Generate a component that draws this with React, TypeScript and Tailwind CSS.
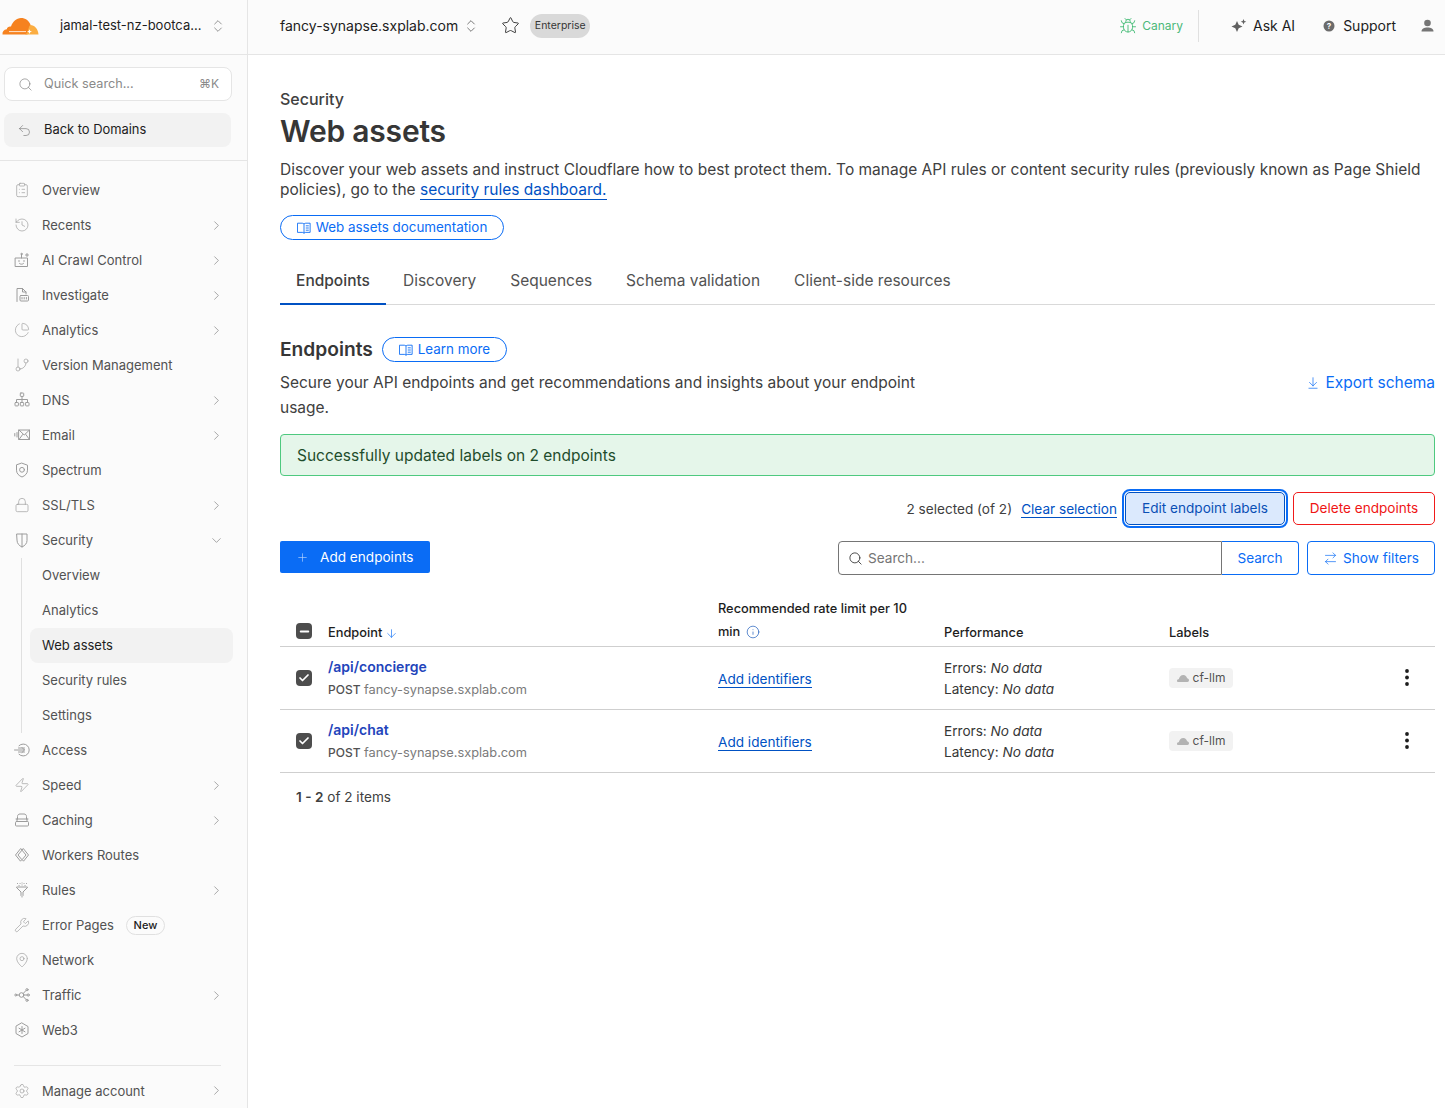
import React from "react";
import {
  ClipboardList, History, PieChart, GitBranch, Lock, Zap, Wrench, MapPin, Settings, ChevronRight, ChevronDown,
  ChevronsUpDown, Search, Undo2, Star, Bug, Plus, ArrowDown, ArrowDownToLine,
  ArrowRightLeft, Info, Check, Minus,
} from "lucide-react";

type IconProps = { size?: number; strokeWidth?: number; className?: string };

function mk(children: React.ReactNode, w = 16) {
  return function Custom({ size = 16, strokeWidth = 1, className }: IconProps) {
    return (
      <svg width={(size * w) / 16} height={size} viewBox={`0 0 ${w} 16`} fill="none" stroke="currentColor" strokeWidth={strokeWidth} strokeLinecap="round" strokeLinejoin="round" className={className}>
        {children}
      </svg>
    );
  };
}

const InvestigateIcon = mk(<><path d="M3 14.500V1.500h5.500L12 5v2" /><path d="M8.500 1.500V5H12" /><rect x="6" y="8.500" width="8.500" height="5.500" rx="1" /><path d="M8 10.500v1.500M10.200 10.500v1.500M12.400 10.500v1.500" /></>);
const RobotIcon = mk(<><rect x="1.500" y="6" width="12" height="8.500" /><path d="M7.500 2.500V6" /><circle cx="7.500" cy="2" r=".7" /><path d="M5 8.500v1M10 8.500v1M5.500 11.500c1 1 3 1 4 0" /><path d="M13 1.500v3M11.500 3h3" /></>);
const DnsIcon = mk(<><rect x="6.300" y="1" width="3.400" height="3.400" rx=".6" /><path d="M8 4.400V10M2.500 10V7.500h11V10" /><rect x="1" y="10.500" width="3.400" height="3.400" rx=".6" /><rect x="6.300" y="10.500" width="3.400" height="3.400" rx=".6" /><rect x="11.600" y="10.500" width="3.400" height="3.400" rx=".6" /></>);
const EmailIcon = mk(<><rect x="5" y="3" width="10.500" height="9.500" /><path d="M5 3l5.200 5 5.300-5M5 12.500l3.700-5M15.500 12.500l-3.700-5" /><path d="M3 5.500v4.500M.8 6.500v2.500" /></>);
const SpectrumIcon = mk(<><path d="M8 1.200l5.500 2v5c0 3.300-2.300 5.500-5.500 6.800-3.200-1.300-5.500-3.500-5.500-6.800v-5z" /><circle cx="8" cy="7.800" r="2.400" /></>);
const ShieldIcon = mk(<><path d="M3 2h10v6.500c0 3-2 5-5 6.500-3-1.500-5-3.500-5-6.500z" /><path d="M8 2v13" /></>);
const AccessIcon = mk(<><path d="M5 3.700a6 6 0 1 1 0 8.600" /><path d="M.5 8h10M8 5.500L10.500 8 8 10.500M4.500 6h6M4.500 10h6" /></>);
const CacheIcon = mk(<><path d="M3.500 7V4.500c0-1.500 1-2.500 2.500-2.500h4c1.500 0 2.500 1 2.500 2.500V7" /><path d="M2 7h12" /><rect x="1.500" y="9.500" width="13" height="4.500" rx="1" /><path d="M3 7v2.500M13 7v2.500" /></>);
const WorkersIcon = mk(<><path d="M6.500 1.800L1.500 8l5 6.200 1.300-1.600L4 8l3.800-4.600z" /><path d="M9.500 1.800l5 6.200-5 6.200-1.300-1.600L12 8 8.200 3.400z" /></>);
const RulesIcon = mk(<><path d="M2.500 5.500L7 10v3.500M13.500 5.500L9 10v3.500" /><path d="M8 14.500v.5" /><path d="M3.500 1.500h.1M6 1.500h.1M8 1h.1M10 1.500h.1M12.500 1.500h.1M5 3.500h.1M8 3h.1M11 3.500h.1M3 5h10" /></>);
const TrafficIcon = mk(<><circle cx="1.800" cy="8" r="1" /><path d="M2.800 8H5" /><circle cx="7.500" cy="8" r="2.300" /><path d="M9.200 6.500L12 3.500M9.800 8h3.200M9.200 9.500l2.800 3" /><circle cx="13" cy="2.700" r="1.100" /><circle cx="14.200" cy="8" r="1.100" /><circle cx="13" cy="13.300" r="1.100" /></>);
const Web3Icon = mk(<><path d="M8 1l6 3.500v7L8 15l-6-3.500v-7z" /><path d="M8 4.500v7M5 6.200l6 3.600M11 6.200L5 9.800" /></>);
const BookIcon = mk(<><path d="M1 2.500h5c1 0 1.500.5 2 1 .5-.5 1-1 2-1h5v10.500h-5c-1 0-1.500.3-2 1-.5-.7-1-1-2-1H1z" /><path d="M8 3.500V14M10.500 5.500h2.500M10.500 8h2.500M10.500 10.500h2.500" /></>);

function Logo() {
  return (
    <svg width="38" height="18" viewBox="0 0 38 18" className="shrink-0">
      <path d="M1.500 17.500c-.3-2.800 1.300-5 4.300-5.300.4-1.900 2.100-3 4.200-2.600C11.500 4.600 15.500 1 20 1c4.300 0 8 2.700 9.500 6.500L26.500 17.500z" fill="#f6821f" />
      <path d="M29 8c4.300-.2 8.200 3.800 8.500 9.500H24c1.500-.8 2.400-1.800 2.800-3.200.5-2 1-4.300 2.200-6.300z" fill="#fbad41" />
      <path d="M8 14.600h17" stroke="#fff" strokeWidth="0.8" />
      <path d="M28.500 12.300l.7 1.700 1.800.6-1.800.6-.7 1.700-.7-1.700-1.800-.6 1.800-.6z" fill="#fff" />
    </svg>
  );
}

type Item = { label: string; icon?: React.ElementType; arrow?: "right" | "down"; active?: boolean; badge?: string };

const upper: Item[] = [
  { label: "Overview", icon: ClipboardList },
  { label: "Recents", icon: History, arrow: "right" },
  { label: "AI Crawl Control", icon: RobotIcon, arrow: "right" },
  { label: "Investigate", icon: InvestigateIcon, arrow: "right" },
  { label: "Analytics", icon: PieChart, arrow: "right" },
  { label: "Version Management", icon: GitBranch },
  { label: "DNS", icon: DnsIcon, arrow: "right" },
  { label: "Email", icon: EmailIcon, arrow: "right" },
  { label: "Spectrum", icon: SpectrumIcon },
  { label: "SSL/TLS", icon: Lock, arrow: "right" },
  { label: "Security", icon: ShieldIcon, arrow: "down" },
];
const subs: Item[] = [
  { label: "Overview" },
  { label: "Analytics" },
  { label: "Web assets", active: true },
  { label: "Security rules" },
  { label: "Settings" },
];
const lower: Item[] = [
  { label: "Access", icon: AccessIcon },
  { label: "Speed", icon: Zap, arrow: "right" },
  { label: "Caching", icon: CacheIcon, arrow: "right" },
  { label: "Workers Routes", icon: WorkersIcon },
  { label: "Rules", icon: RulesIcon, arrow: "right" },
  { label: "Error Pages", icon: Wrench, badge: "New" },
  { label: "Network", icon: MapPin },
  { label: "Traffic", icon: TrafficIcon, arrow: "right" },
  { label: "Web3", icon: Web3Icon },
];

function NavRow({ item }: { item: Item }) {
  const Icon = item.icon;
  return (
    <div className="flex h-[35px] items-center pb-[1px] pl-[14px] pr-[23px]">
      <span className="flex w-[28px] shrink-0 items-center">
        {Icon && <Icon size={16} strokeWidth={1} className="text-[#9c9c9c]" />}
      </span>
      <span className="text-[13px] leading-5 text-[#525252]">{item.label}</span>
      {item.badge && (
        <span className="ml-[12px] flex h-[19px] w-[39px] items-center justify-center rounded-full border border-[#e0e0e0] text-[11px] font-medium text-[#1d1d1d]">
          {item.badge}
        </span>
      )}
      {item.arrow === "right" && <ChevronRight size={15} strokeWidth={1} className="ml-auto text-[#757575]" />}
      {item.arrow === "down" && <ChevronDown size={15} strokeWidth={1} className="ml-auto text-[#757575]" />}
    </div>
  );
}

function Sidebar() {
  return (
    <aside className="flex h-[1108px] w-[248px] shrink-0 flex-col overflow-hidden border-r border-[#e5e5e5]">
      <div className="flex h-[55px] shrink-0 items-center border-b border-[#e5e5e5] pb-[3px] pl-[1px] pr-[21px]">
        <Logo />
        <span className="ml-[21px] whitespace-nowrap text-[13px] font-normal text-[#1d1d1d]">jamal-test-nz-bootca...</span>
        <ChevronsUpDown size={16} strokeWidth={1} className="ml-auto text-[#616161]" />
      </div>
      <div className="border-b border-[#e5e5e5] pb-[13px] pl-[4px] pr-[16px] pt-[12px]">
        <div className="mr-[-1px] flex h-[34px] items-center rounded-[8px] border border-[#e5e5e5] bg-white pl-[13px] pr-[12px]">
          <Search size={15} strokeWidth={1} className="text-[#757575]" />
          <span className="ml-[11px] text-[12.7px] text-[#8a8a8a]">Quick search...</span>
          <span className="ml-auto text-[12px] text-[#8a8a8a]">⌘K</span>
        </div>
        <div className="mt-[12px] flex h-[34px] items-center rounded-[8px] bg-[#f2f2f2] pl-[13px]">
          <Undo2 size={15} strokeWidth={1} className="text-[#757575]" />
          <span className="ml-[12px] text-[12.9px] text-[#1d1d1d]">Back to Domains</span>
        </div>
      </div>
      <nav className="pt-[12px]">
        {upper.map((i) => <NavRow key={i.label} item={i} />)}
        <div className="ml-[21px] border-l border-[#e0e0e0] pl-[8px] pr-[14px]">
          {subs.map((s) => (
            <div key={s.label} className={`flex h-[35px] items-center rounded-[8px] pl-[12px] text-[13px] ${s.active ? "bg-[#f2f2f2] text-[#1d1d1d]" : "text-[#525252]"}`}>
              {s.label}
            </div>
          ))}
        </div>
        {lower.map((i) => <NavRow key={i.label} item={i} />)}
      </nav>
      <div className="mb-[8px] ml-[14px] mr-[26px] mt-[17px] border-t border-[#e5e5e5]" />
      <NavRow item={{ label: "Manage account", icon: Settings, arrow: "right" }} />
    </aside>
  );
}

function Header() {
  return (
    <header className="flex h-[55px] shrink-0 items-center border-b border-[#e5e5e5] pb-[3px] pl-[32px] pr-[11px]">
      <span className="text-[14px] text-[#1d1d1d]">fancy-synapse.sxplab.com</span>
      <ChevronsUpDown size={16} strokeWidth={1} className="ml-[5px] text-[#363636]" />
      <Star size={19} strokeWidth={1.2} className="ml-[22px] text-[#363636]" />
      <span className="ml-[10px] flex h-[24px] w-[60px] items-center justify-center rounded-full bg-[#d9d9d9] pt-[1px] text-[10.5px] text-[#363636]">Enterprise</span>
      <div className="ml-auto flex items-center">
        <Bug size={18} strokeWidth={1.2} className="text-[#3fba73]" />
        <span className="ml-[5px] text-[12px] text-[#4cb97a]">Canary</span>
        <div className="ml-[15px] h-[32px] w-px bg-[#e0e0e0]" />
        <svg width="16" height="16" viewBox="0 0 16 16" className="ml-[32px] text-[#616161]" fill="currentColor">
          <path d="M6 3l1.700 3.800L11.500 8.500 7.700 10.200 6 14l-1.700-3.800L.5 8.500l3.800-1.700z" />
          <path d="M12.500 1l.8 2 2 .8-2 .8-.8 2-.8-2-2-.8 2-.8z" />
        </svg>
        <span className="ml-[6px] text-[14px] text-[#1d1d1d]">Ask AI</span>
        <svg width="12" height="12" viewBox="0 0 12 12" className="ml-[28px]">
          <circle cx="6" cy="6" r="5.500" fill="#6b6b6b" />
          <text x="6" y="8.800" textAnchor="middle" fontSize="8" fontWeight="700" fill="#fff" fontFamily="Inter, sans-serif">?</text>
        </svg>
        <span className="ml-[8px] text-[14px] text-[#1d1d1d]">Support</span>
        <svg width="13" height="13" viewBox="0 0 13 13" className="ml-[25px]" fill="#757575">
          <circle cx="6.500" cy="4" r="3.300" />
          <path d="M0.500 12.500c0-2.800 2.500-4 6-4s6 1.200 6 4z" />
        </svg>
      </div>
    </header>
  );
}

function Pill({ children, w }: { children: React.ReactNode; w: string }) {
  return (
    <span className={`inline-flex h-[25px] items-center justify-center gap-[5px] rounded-full border border-[#0a6cf5] text-[13.4px] text-[#0a6cf5] ${w}`}>
      <BookIcon size={14} strokeWidth={1} />
      {children}
    </span>
  );
}

function CheckBox({ kind }: { kind: "check" | "minus" }) {
  return (
    <span className="flex h-[16px] w-[16px] items-center justify-center rounded-[4px] bg-[#4d4d4d]">
      {kind === "check" ? <Check size={12} strokeWidth={3.5} className="text-white" /> : <Minus size={13} strokeWidth={3.5} className="text-white" />}
    </span>
  );
}

function Row({ path }: { path: string }) {
  return (
    <div className="grid h-[63px] grid-cols-[48px_390px_226px_225px_1fr] items-center border-b border-[#cfcfcf] text-[13.6px]">
      <div className="pl-[16px]"><CheckBox kind="check" /></div>
      <div>
        <div className="mt-[-1px] text-[14px] font-semibold leading-[21px] text-[#2244bb]">{path}</div>
        <div className="mt-[2px] text-[12.8px] leading-[21px] text-[#7a7a7a]"><span className="text-[12px] font-medium text-[#525252]">POST</span> fancy-synapse.sxplab.com</div>
      </div>
      <div className="pt-[3px]"><span className="border-b border-[#0051c3] leading-[18px] text-[#0051c3]">Add identifiers</span></div>
      <div className="pt-[2px] leading-[21px] text-[#363636]">
        <div>Errors: <em>No data</em></div>
        <div>Latency: <em>No data</em></div>
      </div>
      <div className="flex items-center justify-between pb-[1px] pr-[25px]">
        <span className="flex h-[20px] w-[64px] items-center justify-center gap-[4px] rounded-[4px] bg-[#f2f2f2] text-[12px] text-[#525252]">
          <svg width="12" height="8" viewBox="0 0 12 8" fill="#b3b3b3"><path d="M1 8C.3 8 0 7.300 0 6.700 0 5.800.8 5.200 1.800 5.300 2.200 3 4 1 6.300 1c2 0 3.400 1.300 3.800 3.300C11.300 4.400 12 5.400 12 6.300 12 7.300 11.300 8 10.500 8z" /></svg>
          cf-llm
        </span>
        <svg width="6" height="17" viewBox="0 0 6 17" fill="#1d1d1d"><circle cx="3" cy="2" r="1.900" /><circle cx="3" cy="8.500" r="1.900" /><circle cx="3" cy="15" r="1.900" /></svg>
      </div>
    </div>
  );
}

export default function App() {
  return (
    <div className="flex h-[1108px] w-[1445px] overflow-hidden bg-[#fbfbfb] font-['Inter',sans-serif]">
      <Sidebar />
      <main className="flex min-w-0 flex-1 flex-col bg-white">
        <div className="bg-[#fbfbfb]"><Header /></div>
        <div className="pl-[32px] pr-[10px]">
          <div className="mt-[34px] text-[16px] font-medium leading-5 text-[#404040]">Security</div>
          <h1 className="mt-[2px] text-[30px] font-semibold leading-[40px] tracking-[-0.2px] text-[#363636]">Web assets</h1>
          <p className="mt-[9px] text-[15.5px] leading-5 text-[#404040]">
            Discover your web assets and instruct Cloudflare how to best protect them. To manage API rules or content security rules (previously known as Page Shield policies), go to the{" "}
            <span className="border-b border-[#0051c3] text-[#0051c3]">security rules dashboard.</span>
          </p>
          <div className="mt-[15px] flex"><Pill w="w-[224px]">Web assets documentation</Pill></div>

          <div className="mt-[22px] flex h-[43px] border-b border-[#d9d9d9] text-[15.5px] text-[#525252]">
            <span className="mb-[-1px] flex w-[106px] items-center justify-center border-b-2 border-[#0051c3] pb-[3px] font-medium text-[#404040]">Endpoints</span>
            <span className="flex items-center pb-[5px] pl-[17px]">Discovery</span>
            <span className="flex items-center pb-[5px] pl-[34px]">Sequences</span>
            <span className="flex items-center pb-[5px] pl-[34px]">Schema validation</span>
            <span className="flex items-center pb-[5px] pl-[34px]">Client-side resources</span>
          </div>

          <div className="mt-[32px] flex items-center">
            <h2 className="text-[19.2px] font-semibold leading-[25px] text-[#363636]">Endpoints</h2>
            <span className="ml-[9px] flex"><Pill w="w-[125px]">Learn more</Pill></span>
          </div>
          <div className="mt-[8px] flex items-start justify-between">
            <p className="w-[660px] text-[15.5px] leading-[25px] text-[#404040]">Secure your API endpoints and get recommendations and insights about your endpoint usage.</p>
            <span className="flex items-center gap-[5px] text-[15.5px] leading-[25px] text-[#0a6cf5]"><ArrowDownToLine size={14} strokeWidth={1.2} />Export schema</span>
          </div>

          <div className="mt-[14px] flex h-[42px] items-center rounded-[4px] border border-[#4ec97f] bg-[#e5f6ea] pl-[16px] pt-[1px] text-[15.5px] text-[#1f4d2c]">
            Successfully updated labels on 2 endpoints
          </div>

          <div className="mt-[16px] flex h-[33px] items-center justify-end text-[13.6px]">
            <span className="pt-[1px] text-[#404040]">2 selected (of 2)</span>
            <span className="ml-[9px] mt-[1px] border-b border-[#0051c3] leading-[16px] text-[#0051c3]">Clear selection</span>
            <span className="ml-[8px] flex h-[33px] w-[160px] items-center justify-center rounded-[5px] border border-[#0051c3] bg-[#dbe9fd] text-[#0a4fb5] outline-2 outline-offset-1 outline-[#0a6cf5]">Edit endpoint labels</span>
            <span className="ml-[8px] flex h-[33px] w-[142px] items-center justify-center rounded-[5px] border border-[#f01a1a] text-[#ef1515]">Delete endpoints</span>
          </div>

          <div className="mt-[16px] flex h-[34px] items-start justify-between text-[13.6px]">
            <span className="flex h-[32px] w-[150px] items-center rounded-[2px] bg-[#0a6cf5] pl-[16px] text-white">
              <Plus size={13} strokeWidth={1.2} className="text-[#b8d4fc]" />
              <span className="ml-[11px]">Add endpoints</span>
            </span>
            <div className="flex">
              <div className="flex h-[34px] w-[384px] items-center rounded-l-[4px] border border-[#757575] pl-[9px]">
                <Search size={15} strokeWidth={1.4} className="text-[#363636]" />
                <span className="ml-[5px] text-[#757575]">Search...</span>
              </div>
              <span className="flex h-[34px] w-[77px] items-center justify-center rounded-r-[4px] border border-l-0 border-[#0a6cf5] text-[#0a6cf5]">Search</span>
              <span className="ml-[8px] flex h-[34px] w-[128px] items-center justify-center gap-[5px] rounded-[4px] border border-[#0a6cf5] text-[#0a6cf5]">
                <ArrowRightLeft size={15} strokeWidth={1.1} />Show filters
              </span>
            </div>
          </div>

          <div className="mt-[21px] grid h-[51px] grid-cols-[48px_390px_226px_225px_1fr] items-end border-b border-[#cfcfcf] pb-[3px] text-[12.8px] font-medium text-[#1d1d1d]">
            <div className="pb-[4px] pl-[16px]"><CheckBox kind="minus" /></div>
            <div className="flex items-center gap-[3px] leading-[20px]">Endpoint <ArrowDown size={13} strokeWidth={1.2} className="text-[#0a6cf5]" /></div>
            <div className="w-[200px] leading-[23px]">
              Recommended rate limit per 10 min <Info size={14} strokeWidth={1.1} className="ml-[2px] inline align-[-3px] text-[#0a4fb5]" />
            </div>
            <div className="leading-[20px]">Performance</div>
            <div className="leading-[20px]">Labels</div>
          </div>
          <Row path="/api/concierge" />
          <Row path="/api/chat" />
          <div className="mt-[14px] pl-[16px] text-[13.6px] leading-5 text-[#404040]"><span className="font-semibold">1 - 2</span> of 2 items</div>
        </div>
      </main>
    </div>
  );
}
